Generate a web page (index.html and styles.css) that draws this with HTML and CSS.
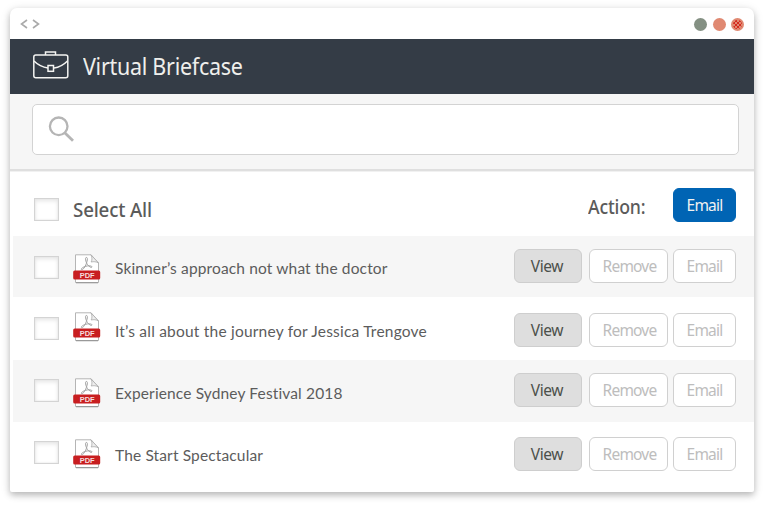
FILE: index.html
```
<!DOCTYPE html>
<html lang="en">
<head>
<meta charset="utf-8">
<title>Virtual Briefcase</title>
<link rel="stylesheet" href="styles.css">
</head>
<body>
<svg class="defs" width="0" height="0" aria-hidden="true">
  <symbol id="pdf" viewBox="0 0 28 30">
    <path d="M2.500.8H18L25.500 9v19.500H2.500z" fill="#fff" stroke="#b5b5b5"/>
    <path d="M18 .8c1.500 3 1 5.500 .2 7.200 2.500-.6 5-.4 7.300 1z" fill="#eee" stroke="#aaa" stroke-width=".8"/>
    <path d="M3 28.700h22" stroke="#999" stroke-width="1.200"/>
    <path d="M13 3.500c2.500-.5 1.200 4-.2 7.500-1 2.500-3 5-4.300 4.500-1-1 2.500-3 5.500-3.500 2.500-.4 5.300 0 5 1-.5 1.300-3.500-.7-5-3.200-1.300-2.200-2-6-1-6.300z" fill="none" stroke="#a3a3a3"/>
    <rect x=".2" y="16.500" width="27" height="9" rx="1.500" fill="#c81e20"/>
  </symbol>
</svg>
<div class="window">
  <div class="titlebar">
    <svg width="22" height="12" viewBox="0 0 22 12" fill="none" stroke="#aaa" stroke-width="1.600"><path d="M8 2 2.500 6 8 10M14 2l5.500 4L14 10"/></svg>
    <div class="dots"><i class="dot green"></i><i class="dot"></i><i class="dot speckled"></i></div>
  </div>
  <header class="header">
    <svg width="36" height="28" viewBox="0 0 36 28" fill="none" stroke="#f4f4f2" stroke-width="1.500"><rect x=".8" y="4" width="34" height="22.700" rx="2"/><path d="M12.500 4V1h10v3M1 10c4 4 8.500 6.300 14 7M34.500 10c-4 4-8 6.300-13.500 7"/><rect x="15" y="14.500" width="5.500" height="5.800"/></svg>
    <h1>Virtual Briefcase</h1>
  </header>
  <div class="search">
    <div class="field"><svg width="26" height="26" viewBox="0 0 26 26" fill="none" stroke="#b5b5b5"><circle cx="10.700" cy="10.300" r="8.800" stroke-width="2.300"/><path d="m17 17 8 7.700" stroke-width="2.800"/></svg></div>
  </div>
  <div class="select-row">
    <span class="check"></span><b class="select-label">Select All</b>
    <b class="action-label">Action:</b><span class="btn primary">Email</span>
  </div>
  <div class="list">
    <div class="row r1"><span class="check"></span><svg class="icon" viewBox="0 0 28 30"><use href="#pdf"/><text class="pdf-label" x="6.700" y="23.600" textLength="15" lengthAdjust="spacingAndGlyphs">PDF</text></svg><span class="name">Skinner’s approach not what the doctor</span><div class="actions"><span class="btn view">View</span><span class="btn remove">Remove</span><span class="btn">Email</span></div></div>
    <div class="row r2"><span class="check"></span><svg class="icon" viewBox="0 0 28 30"><use href="#pdf"/><text class="pdf-label" x="6.700" y="23.600" textLength="15" lengthAdjust="spacingAndGlyphs">PDF</text></svg><span class="name wide">It’s all about the journey for Jessica Trengove</span><div class="actions"><span class="btn view">View</span><span class="btn remove">Remove</span><span class="btn">Email</span></div></div>
    <div class="row r3"><span class="check"></span><svg class="icon" viewBox="0 0 28 30"><use href="#pdf"/><text class="pdf-label" x="6.700" y="23.600" textLength="15" lengthAdjust="spacingAndGlyphs">PDF</text></svg><span class="name">Experience Sydney Festival 2018</span><div class="actions"><span class="btn view">View</span><span class="btn remove">Remove</span><span class="btn">Email</span></div></div>
    <div class="row r4"><span class="check"></span><svg class="icon" viewBox="0 0 28 30"><use href="#pdf"/><text class="pdf-label" x="6.700" y="23.600" textLength="15" lengthAdjust="spacingAndGlyphs">PDF</text></svg><span class="name">The Start Spectacular</span><div class="actions"><span class="btn view">View</span><span class="btn remove">Remove</span><span class="btn">Email</span></div></div>
  </div>
</div>
</body>
</html>
```
FILE: styles.css
```
* { box-sizing: border-box; }
body { margin: 0; padding: 8px 13px 0 10px; height: 513px; overflow: hidden; background: #fff; font-family: "Noto Sans", sans-serif; }
svg { display: block; flex: none; }
.defs { display: none; }
.window { width: 744px; height: 484px; background: #fff; border-radius: 7px 7px 2px 2px; box-shadow: 0 3px 6px rgba(0,0,0,.22), 0 2px 11px rgba(0,0,0,.11); overflow: hidden; }
.titlebar { height: 31px; display: flex; justify-content: space-between; align-items: center; padding: 1px 10px 0 9px; }
.dots { display: flex; gap: 5.5px; }
.dot { width: 13px; height: 13px; border-radius: 50%; background: #e08972; }
.green { background: #849083; }
.speckled { background: repeating-conic-gradient(#d42a20 0 25%, #e08972 0 50%) 0 0 / 4px 4px; border: 2px solid #e08972; }
.header { height: 55px; background: #343c46; display: flex; padding: 12px 0 0 22.5px; gap: 14.5px; }
h1 { margin: 0; font-size: 23px; line-height: 31px; font-weight: 400; color: #efefec; letter-spacing: -.3px; white-space: nowrap; transform: scaleX(.935); transform-origin: left; }
.search { height: 78px; background: #f6f6f6; padding: 10px 15px 0 22px; box-shadow: inset 0 -1px #f1f1f1, inset 0 -3px #dfdfdf; }
.field { height: 51px; border: 1px solid #d3d3d3; border-radius: 5px; background: #fff; padding: 11px 0 0 15px; }
.select-row { height: 64px; display: flex; align-items: flex-start; padding: 16px 18px 0 24px; }
.select-row .check { margin-top: 10px; }
.select-label, .action-label { font-size: 20.5px; line-height: 28px; font-weight: 500; color: #5b5b5b; letter-spacing: -.2px; white-space: nowrap; transform: scaleX(.915); transform-origin: left; }
.select-label { margin: 7px 0 0 13.5px; }
.action-label { margin: 4px 0 0 auto; width: 85px; transform: scaleX(.865); }
.check { flex: none; width: 25px; height: 23px; border: 1px solid #d4d4d4; background: #fff; box-shadow: inset 0 2px 4px #e5e5e5, inset 0 0 2px #e0e0e0; }
.btn { display: block; flex: none; width: 63px; height: 34px; border: 1px solid #d0d0d0; border-radius: 6px; background: #fff; color: #bdbdbd; font-size: 15.5px; line-height: 33px; letter-spacing: -.8px; text-align: center; }
.primary { background: #0064b4; border-color: #0064b4; color: #f1f1f1; }
.view { width: 68px; margin-right: 7px; background: #dedede; border-color: #cecece; color: #4c504b; letter-spacing: -.4px; padding-right: 2px; }
.remove { width: 79px; margin-right: 5px; padding-left: 2px; }
.list { padding-left: 3px; }
.row { display: flex; align-items: flex-start; padding: 0 18px 0 21px; }
.row:nth-child(odd) { background: #f6f6f6; }
.check { margin-top: var(--check); }
.icon { width: 28px; height: 30px; margin: var(--icon) 0 0 13.5px; }
.pdf-label { font: 700 6.500px "Liberation Sans", sans-serif; fill: #f5dede; }
.name { margin: var(--name) 0 0 14.5px; font: 400 15.5px/22px Lato, sans-serif; color: #5c5c5c; letter-spacing: .14px; white-space: nowrap; }
.wide { letter-spacing: .21px; }
.actions { display: flex; margin: var(--btn) 0 0 auto; }
.r1 { height: 61px; --check: 20px; --icon: 18px; --name: 21px; --btn: 13px; }
.r2 { height: 63px; --check: 20px; --icon: 15px; --name: 23px; --btn: 16px; }
.r3 { height: 62px; --check: 19px; --icon: 18px; --name: 22px; --btn: 13px; }
.r4 { height: 70px; --check: 19px; --icon: 17px; --name: 22px; --btn: 15px; }
```
